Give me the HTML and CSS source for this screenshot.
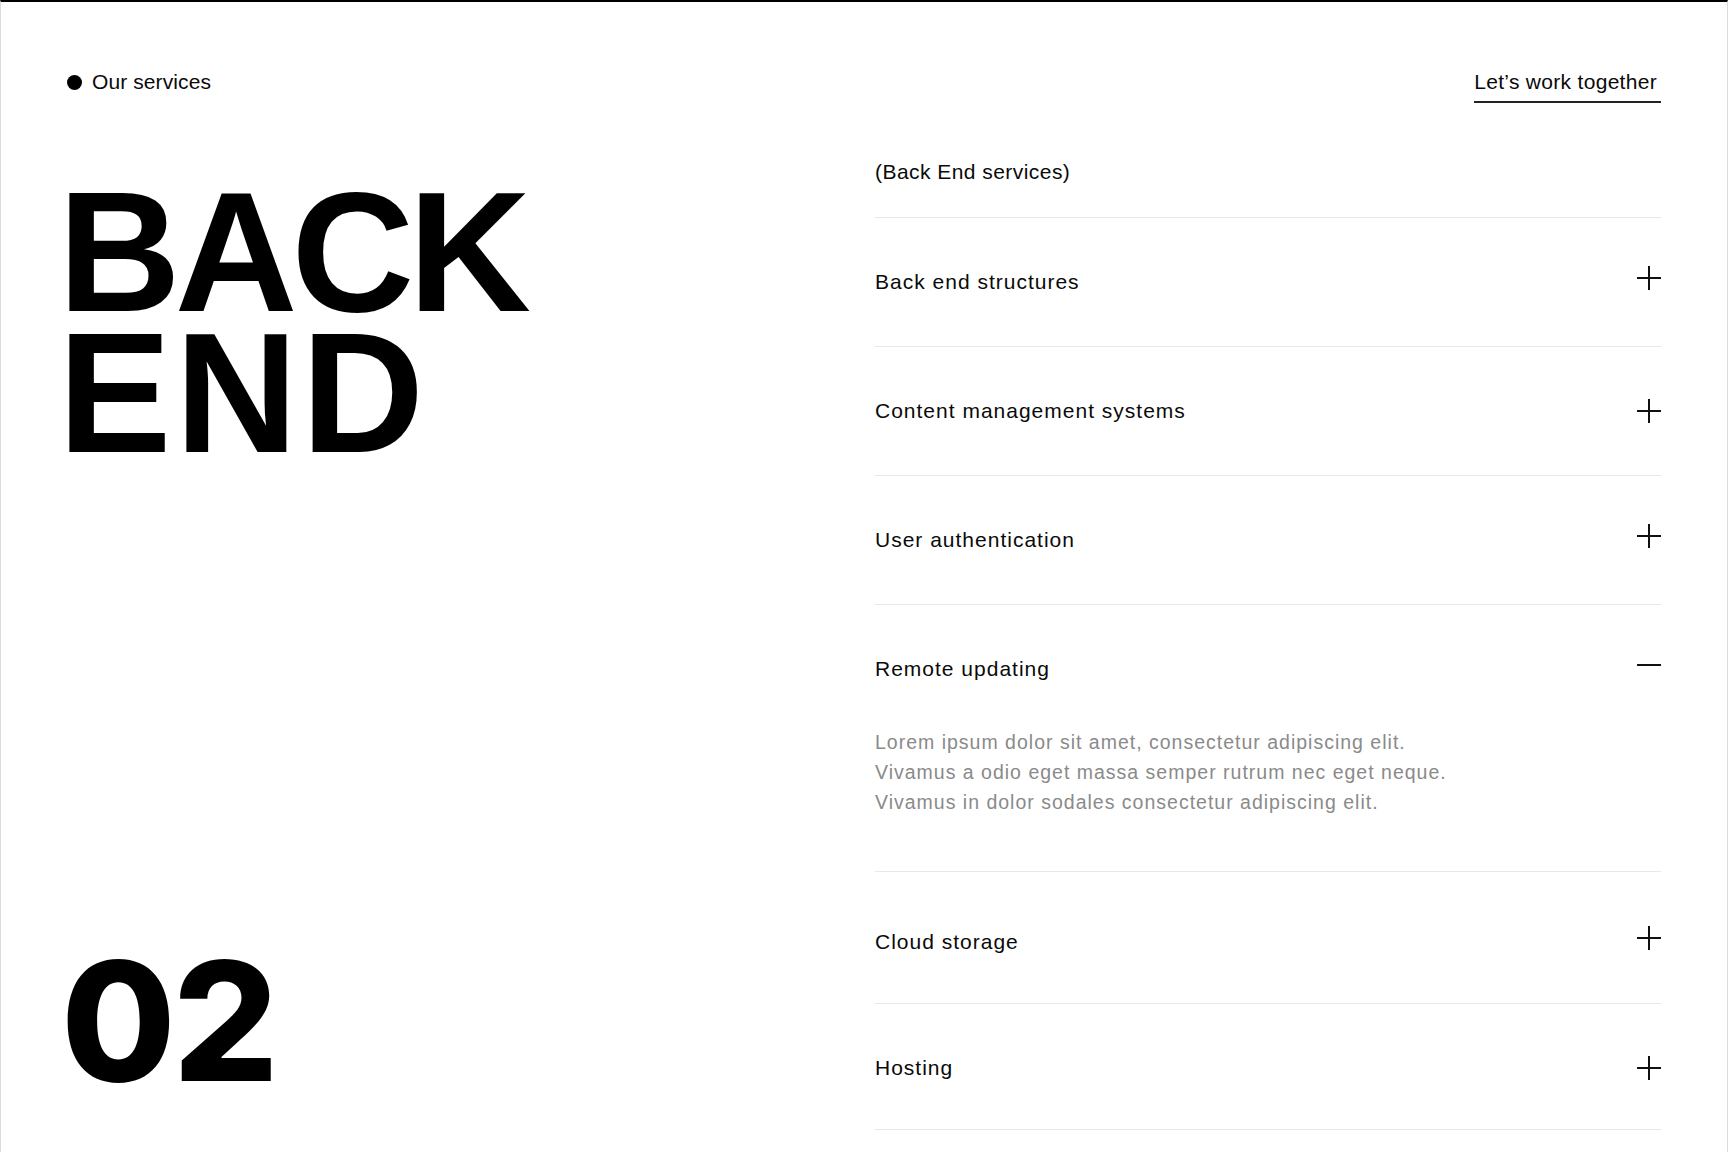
FILE: index.html
```html
<!DOCTYPE html>
<html lang="en">
<head>
<meta charset="utf-8">
<title>Our services — Back End</title>
<link rel="stylesheet" href="styles.css">
</head>
<body>
<div class="page">
  <header class="topbar">
    <div class="eyebrow"><span class="dot"></span>Our services</div>
    <a class="cta" href="#">Let’s work together</a>
  </header>

  <main class="services">
    <div class="intro">
      <h1 class="title"><span class="title-line title-line--back">BACK</span><span class="title-line title-line--end">END</span></h1>
      <div class="index">02</div>
    </div>

    <div class="list">
      <p class="list-label">(Back End services)</p>

      <div class="item">
        <div class="item-head">
          <span class="item-title">Back end structures</span>
          <svg class="icon" viewBox="0 0 24 24" aria-hidden="true"><path d="M12 0V24M0 12H24"/></svg>
        </div>
      </div>

      <div class="item">
        <div class="item-head">
          <span class="item-title">Content management systems</span>
          <svg class="icon icon--level" viewBox="0 0 24 24" aria-hidden="true"><path d="M12 0V24M0 12H24"/></svg>
        </div>
      </div>

      <div class="item">
        <div class="item-head">
          <span class="item-title">User authentication</span>
          <svg class="icon" viewBox="0 0 24 24" aria-hidden="true"><path d="M12 0V24M0 12H24"/></svg>
        </div>
      </div>

      <div class="item open">
        <div class="item-head">
          <span class="item-title">Remote updating</span>
          <svg class="icon" viewBox="0 0 24 24" aria-hidden="true"><path d="M0 12H24"/></svg>
        </div>
        <p class="item-body">Lorem ipsum dolor sit amet, consectetur adipiscing elit.<br>Vivamus a odio eget massa semper rutrum nec eget neque.<br>Vivamus in dolor sodales consectetur adipiscing elit.</p>
      </div>

      <div class="item item--after-open">
        <div class="item-head">
          <span class="item-title">Cloud storage</span>
          <svg class="icon" viewBox="0 0 24 24" aria-hidden="true"><path d="M12 0V24M0 12H24"/></svg>
        </div>
      </div>

      <div class="item item--last">
        <div class="item-head">
          <span class="item-title">Hosting</span>
          <svg class="icon icon--level" viewBox="0 0 24 24" aria-hidden="true"><path d="M12 0V24M0 12H24"/></svg>
        </div>
      </div>
    </div>
  </main>
</div>
</body>
</html>
```

FILE: styles.css
```css
* {
  box-sizing: border-box;
}

html, body {
  margin: 0;
  padding: 0;
  background: #ffffff;
}

body {
  font-family: "Liberation Sans", Arial, Helvetica, sans-serif;
  color: #0a0a0a;
}

.page {
  width: 1728px;
  height: 1152px;
  overflow: hidden;
  border-top: 2px solid #000000;
  border-left: 1px solid #dcdcdc;
  border-right: 1px solid #dcdcdc;
  padding: 68px 66px 0;
}

/* ---------- top bar ---------- */
.topbar {
  display: flex;
  justify-content: space-between;
  align-items: flex-start;
}

.eyebrow {
  display: flex;
  align-items: center;
  gap: 10px;
  font-size: 21px;
  line-height: 24px;
  letter-spacing: 0.1px;
}

.dot {
  width: 15px;
  height: 15px;
  border-radius: 50%;
  background: #000000;
  flex: none;
}

.cta {
  display: block;
  font-size: 21px;
  line-height: 24px;
  letter-spacing: 0.3px;
  color: #0a0a0a;
  text-decoration: none;
  padding: 0 4px 7px 0;
  border-bottom: 2px solid #222222;
}

/* ---------- main ---------- */
.services {
  display: grid;
  grid-template-columns: 1fr 1fr;
  column-gap: 22px;
  margin-top: 57px;
}

.intro {
  display: flex;
  flex-direction: column;
  justify-content: space-between;
}

.title {
  margin: 22px 0 0 -9px;
  font-family: "Liberation Sans", Arial, sans-serif;
  font-weight: 700;
  font-size: 170px;
  line-height: 141px;
  color: #000000;
}

.title-line {
  display: block;
}

.title-line--back {
  letter-spacing: -6px;
}

.title-line--end {
  letter-spacing: 3.5px;
}

.index {
  margin: 0 0 39px -6px;
  font-family: Inter, "Liberation Sans", sans-serif;
  font-weight: 800;
  font-size: 166px;
  line-height: 141px;
  letter-spacing: -3px;
  color: #000000;
}

/* ---------- accordion list ---------- */
.list-label {
  margin: 0;
  padding-bottom: 33px;
  border-bottom: 1px solid #e8e8e8;
  font-size: 21px;
  line-height: 24px;
  letter-spacing: 0.45px;
}

.item {
  border-bottom: 1px solid #e8e8e8;
}

.item-head {
  display: flex;
  justify-content: space-between;
  align-items: flex-start;
  padding: 52px 0;
}

.item-title {
  font-size: 21px;
  line-height: 24px;
  letter-spacing: 1px;
}

.icon {
  width: 24px;
  height: 24px;
  margin-top: -4px;
  flex: none;
  stroke: #111111;
  stroke-width: 2;
  fill: none;
}

.icon--level {
  margin-top: 0;
}

.item.open .item-head {
  padding-bottom: 46px;
}

.item-body {
  margin: 0;
  padding-bottom: 54px;
  font-size: 19.5px;
  line-height: 30px;
  letter-spacing: 1px;
  color: #8a8a8a;
}

.item--after-open .item-head {
  padding: 58px 0 49px;
}

.item--last .item-head {
  padding: 52px 0 49px;
}
```
